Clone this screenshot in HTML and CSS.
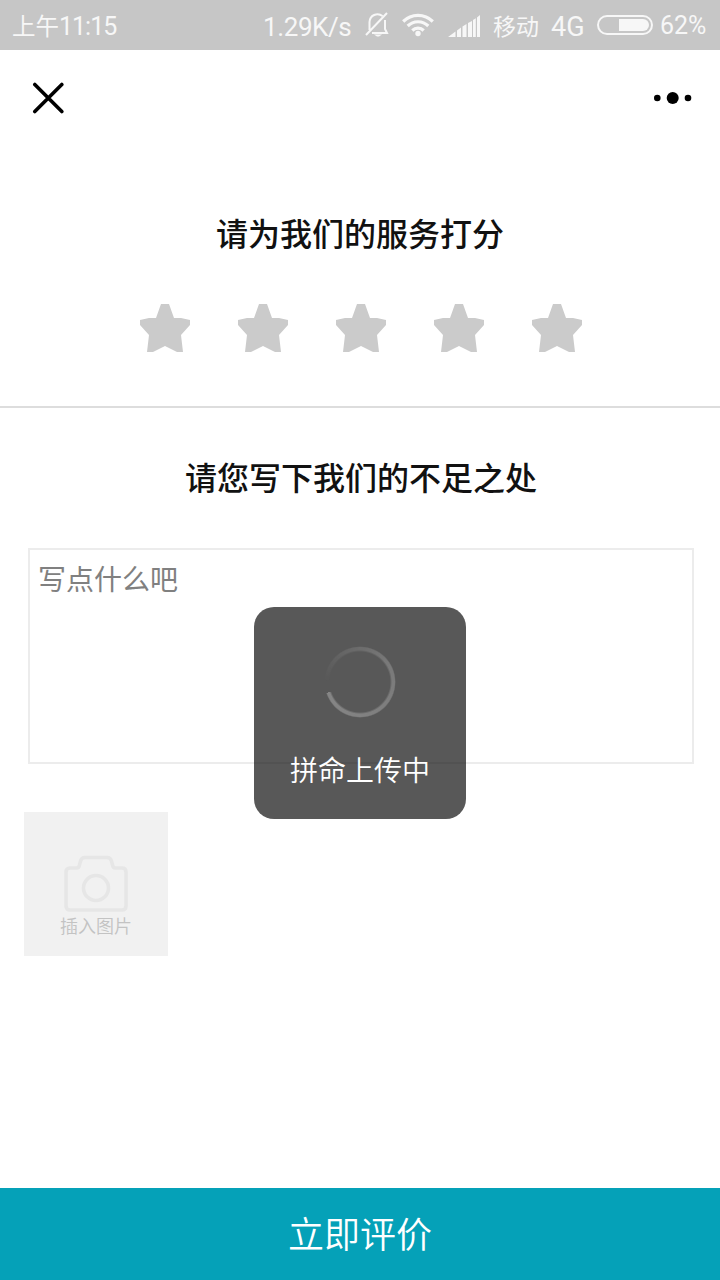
FILE: index.html
```html
<!DOCTYPE html>
<html lang="zh-CN">
<head>
    <meta charset="UTF-8">
    <meta name="viewport" content="width=device-width, initial-scale=1.0">
    <title>服务评价</title>
    <link rel="stylesheet" href="styles.css">
</head>
<body>
    <div class="status-bar">
        <span class="time">上午<b>11:15</b></span>
        <span class="speed">1.29K/s</span>
        <svg class="bell" width="24" height="26" viewBox="0 0 24 26" fill="none" stroke="#f7f7f7" stroke-width="2">
            <path d="M4.500 18V10a8 8 0 0 1 13-6M20 8v9l2 4H7M1 23L22 1"/>
            <path d="M9 22.500h8l-3 2h-2z" fill="#f7f7f7" stroke="none"/>
        </svg>
        <svg class="wifi" width="32" height="24" viewBox="0 0 32 24" fill="none" stroke="#f7f7f7" stroke-width="3.200">
            <path d="M1.200 8.500a21 21 0 0 1 29.600 0M5.700 13a14.600 14.600 0 0 1 20.600 0M10.300 17.500a8.200 8.200 0 0 1 11.400 0"/>
            <circle cx="16" cy="20.500" r="2.700" fill="#f7f7f7" stroke="none"/>
        </svg>
        <svg class="signal" width="32" height="22" viewBox="0 0 32 22" fill="#f7f7f7">
            <path d="M0 22L7.500 16.500V22zM9 15.500l4-3V22H9zM14.500 11.500l4-2.500v13h-4zM20 8l4-2v16h-4zM25 5l2.800-1.800V22H25zM29 2.500L32 0v22h-3z"/>
        </svg>
        <span class="carrier">移动</span>
        <span class="network">4G</span>
        <div class="battery"><div class="battery-level"></div></div>
        <span class="percent">62%</span>
    </div>

    <header>
        <svg width="34" height="32" viewBox="0 0 34 32" stroke="#000" stroke-width="3.600" stroke-linecap="round">
            <path d="M2.800 2.500L29.800 29.500M29.800 2.500L2.800 29.500"/>
        </svg>
        <svg width="38" height="14" viewBox="0 0 38 14">
            <circle cx="3.300" cy="7" r="3.300"/>
            <circle cx="18.700" cy="7" r="6"/>
            <circle cx="34" cy="7" r="3.300"/>
        </svg>
    </header>

    <section class="score">
        <h1>请为我们的服务打分</h1>
        <div class="stars">
            <div class="star"></div>
            <div class="star"></div>
            <div class="star"></div>
            <div class="star"></div>
            <div class="star"></div>
        </div>
    </section>

    <section class="comment">
        <h1>请您写下我们的不足之处</h1>
        <textarea placeholder="写点什么吧"></textarea>
        <div class="upload">
            <svg width="64" height="58" viewBox="0 0 64 58" fill="none" stroke="#e6e6e6" stroke-width="3.600">
                <path d="M6 13h6.500q2.500 0 3-3l1-4q1-3.500 4.500-3.500h22q3.500 0 4.500 3.500l1 4q.5 3 3 3H58q4 0 4 4v34q0 4-4 4H6q-4 0-4-4V17q0-4 4-4z"/>
                <circle cx="32" cy="33" r="12.500"/>
            </svg>
            <span>插入图片</span>
        </div>
    </section>

    <button class="submit">立即评价</button>

    <div class="loading">
        <div class="spinner"></div>
        <span>拼命上传中</span>
    </div>
</body>
</html>
```
FILE: styles.css
```css
* {
    box-sizing: border-box;
}

body {
    margin: 0;
    height: 1280px;
    display: flex;
    flex-direction: column;
    background: #fff;
    color: #111;
    font-family: Roboto, "Noto Sans CJK SC", sans-serif;
    overflow: hidden;
}

svg {
    display: block;
    flex: none;
}

/* 状态栏 */
.status-bar {
    height: 50px;
    display: flex;
    align-items: center;
    padding: 2px 12px 0;
    background: #c6c6c6;
    color: #f7f7f7;
    font-size: 26px;
    line-height: 48px;
    white-space: nowrap;
}

.time {
    width: 251px;
    padding-top: 2px;
    font-size: 23.500px;
}

.time b {
    font-size: 25px;
    font-weight: 400;
    letter-spacing: -1px;
}

.speed {
    width: 102px;
    padding-top: 1px;
    letter-spacing: -0.400px;
}

.bell {
    margin-top: -3px;
}

.wifi {
    margin: -3px 0 0 13px;
}

.signal {
    margin: 0 13px 0 14px;
}

.carrier {
    width: 58px;
    padding-top: 3px;
    font-size: 23px;
}

.network {
    width: 46px;
    padding-top: 2px;
    font-size: 27px;
}

.battery {
    width: 56px;
    height: 20px;
    margin: -2px 7px 0 0;
    padding: 2px;
    border: 2px solid #f7f7f7;
    border-radius: 10px;
}

.battery-level {
    width: 62%;
    height: 12px;
    margin-left: auto;
    background: #f7f7f7;
    border-radius: 0 6px 6px 0;
}

.percent {
    font-size: 25px;
}

header {
    height: 96px;
    display: flex;
    justify-content: space-between;
    align-items: center;
    padding: 0 28px 0 32px;
}

h1 {
    margin: 0;
    font-size: 32px;
    font-weight: 500;
    line-height: 48px;
    text-align: center;
}

/* 打分 */
.score {
    height: 262px;
    padding-top: 65px;
    border-bottom: 2px solid #ddd;
}

.stars {
    display: flex;
    justify-content: center;
    gap: 48px;
    margin-top: 45px;
    padding-left: 2px;
}

.star {
    width: 50px;
    height: 48px;
    background: #cbcbcb;
    clip-path: polygon(21px 0, 29px 0, 34px 14px, 41px 14px, 50px 16px, 50px 21px, 41px 31px, 43px 48px, 37px 48px, 25px 42px, 13px 48px, 7px 48px, 9px 31px, 0 21px, 0 16px, 9px 14px, 16px 14px);
}

/* 评论 */
.comment {
    flex: 1;
    padding: 47px 26px 0 28px;
}

textarea {
    display: block;
    width: 100%;
    height: 216px;
    margin-top: 45px;
    padding: 10px 8px;
    border: 2px solid #ececec;
    background: #fff;
    font-family: inherit;
    font-size: 28px;
    line-height: 42px;
    resize: none;
    outline: none;
}

textarea::placeholder {
    color: #808080;
}

.upload {
    width: 144px;
    height: 144px;
    display: flex;
    flex-direction: column;
    align-items: center;
    margin: 48px 0 0 -4px;
    padding-top: 43px;
    background: #f1f1f1;
    color: #c3c3c3;
    font-size: 18px;
    font-weight: 350;
    line-height: 28px;
}

.submit {
    height: 92px;
    border: none;
    padding: 0 0 5px;
    background: #05a1b8;
    color: #fff;
    font-family: inherit;
    font-size: 36px;
    font-weight: 350;
}

/* 上传提示 */
.loading {
    position: absolute;
    left: 254px;
    top: 607px;
    width: 212px;
    height: 212px;
    display: flex;
    flex-direction: column;
    align-items: center;
    padding-top: 39px;
    border-radius: 20px;
    background: rgba(0, 0, 0, 0.655);
    color: #fff;
    font-size: 28px;
    font-weight: 350;
    line-height: 42px;
}

.spinner {
    width: 72px;
    height: 72px;
    margin-bottom: 33px;
    border-radius: 50%;
    background: conic-gradient(from 252deg, rgba(255, 255, 255, 0) 5%, rgba(255, 255, 255, 0.2) 45%, rgba(255, 255, 255, 0.28));
    -webkit-mask: radial-gradient(circle, transparent 30px, #000 32px, #000 34.500px, transparent 36px);
    mask: radial-gradient(circle closest-side, transparent 30px, #000 32px, #000 34.500px, transparent 36px);
}
```
